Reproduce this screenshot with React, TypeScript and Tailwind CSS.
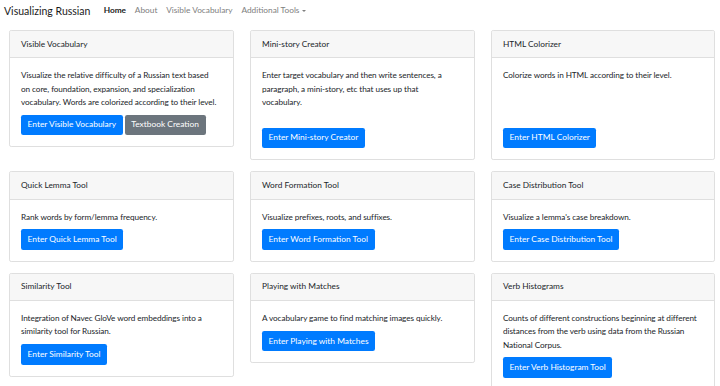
// Visualizing Russian — tool index page, scaled bootstrap-style cards.
import type { ReactNode } from "react";

type Tool = {
  title: string;
  text: ReactNode;
  buttons: { label: string; secondary?: boolean }[];
  // extra empty space under the text (some cards in the first row have <br>s)
  textClass?: string;
};

const TOOLS: Tool[] = [
  {
    title: "Visible Vocabulary",
    text: (
      <>
        Visualize the relative difficulty of a Russian text based
        <br />
        on core, foundation, expansion, and specialization vocabulary. Words are colorized according to their level.
      </>
    ),
    buttons: [{ label: "Enter Visible Vocabulary" }, { label: "Textbook Creation", secondary: true }],
  },
  {
    title: "Mini-story Creator",
    text: "Enter target vocabulary and then write sentences, a paragraph, a mini-story, etc that uses up that vocabulary.",
    buttons: [{ label: "Enter Mini-story Creator" }],
    textClass: "min-h-[52.8px] pr-[4px]",
  },
  {
    title: "HTML Colorizer",
    text: "Colorize words in HTML according to their level.",
    buttons: [{ label: "Enter HTML Colorizer" }],
    textClass: "min-h-[52.8px]",
  },
  {
    title: "Quick Lemma Tool",
    text: "Rank words by form/lemma frequency.",
    buttons: [{ label: "Enter Quick Lemma Tool" }],
  },
  {
    title: "Word Formation Tool",
    text: "Visualize prefixes, roots, and suffixes.",
    buttons: [{ label: "Enter Word Formation Tool" }],
  },
  {
    title: "Case Distribution Tool",
    text: "Visualize a lemma's case breakdown.",
    buttons: [{ label: "Enter Case Distribution Tool" }],
  },
  {
    title: "Similarity Tool",
    text: "Integration of Navec GloVe word embeddings into a similarity tool for Russian.",
    buttons: [{ label: "Enter Similarity Tool" }],
  },
  {
    title: "Playing with Matches",
    text: "A vocabulary game to find matching images quickly.",
    buttons: [{ label: "Enter Playing with Matches" }],
  },
  {
    title: "Verb Histograms",
    text: "Counts of different constructions beginning at different distances from the verb using data from the Russian National Corpus.",
    buttons: [{ label: "Enter Verb Histogram Tool" }],
  },
];

export default function App() {
  return (
    <div className="min-h-[386px] w-[720px] bg-white font-['Lato','Liberation_Sans',sans-serif] text-[#212529]">
      <nav className="flex h-[22px] items-center pl-[4px]">
        <span className="mr-[8.8px] text-[10.5px] leading-[16px] text-[#1a1a1a]">Visualizing Russian</span>
        <div className="flex items-center text-[8.3px] leading-[13.2px]">
          <span className="px-[4.4px] font-bold text-[#1a1a1a]">Home</span>
          <span className="px-[4.4px] text-[#808080]">About</span>
          <span className="px-[4.4px] text-[#808080]">Visible Vocabulary</span>
          <span className="flex items-center px-[4.4px] text-[#808080]">
            Additional Tools
            <span className="ml-[2.5px] h-0 w-0 border-x-[2.6px] border-t-[2.6px] border-x-transparent border-t-[#808080]" />
          </span>
        </div>
      </nav>

      <div className="mt-[8px] grid grid-cols-[225px_225px_224px] items-start gap-x-[16px] gap-y-[11px] pl-[9px] text-[8.3px] leading-[13.2px]">
        {TOOLS.map((t) => (
          <ToolCard key={t.title} tool={t} />
        ))}
      </div>
    </div>
  );
}

function ToolCard({ tool }: { tool: Tool }) {
  return (
    <div className="overflow-hidden rounded-[2.2px] border border-[#dfdfdf] bg-white">
      <div className="border-b border-[#dfdfdf] bg-[#f7f7f7] px-[11px] py-[6.6px]">{tool.title}</div>
      <div className="p-[11px]">
        <p className={"mb-[5.5px] text-[8.2px] tracking-[-0.08px] " + (tool.textClass ?? "")}>{tool.text}</p>
        <div className="flex gap-[2px]">
          {tool.buttons.map((b) => (
            <button
              key={b.label}
              type="button"
              className={
                b.secondary
                  ? "h-[20.5px] rounded-[2.2px] bg-[#6c757d] px-[6.6px] text-[8.4px] text-white"
                  : "h-[20.5px] rounded-[2.2px] bg-[#007bff] px-[6.6px] text-[8.4px] text-white"
              }
            >
              {b.label}
            </button>
          ))}
        </div>
      </div>
    </div>
  );
}
